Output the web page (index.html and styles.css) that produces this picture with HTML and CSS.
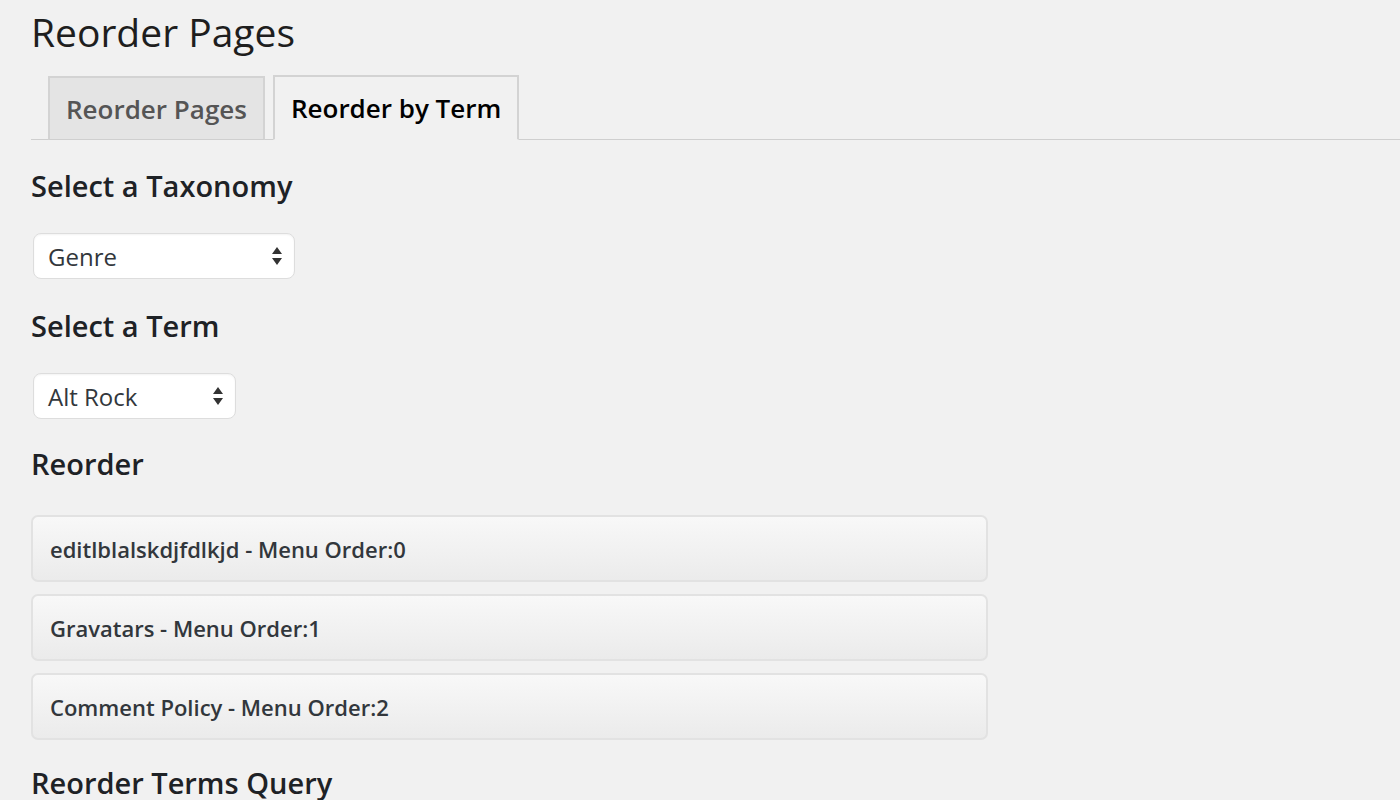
FILE: index.html
```html
<!DOCTYPE html>
<html>
<head>
<meta charset="utf-8">
<link rel="stylesheet" href="styles.css">
</head>
<body>
<div class="wrap">
  <h1 class="title">Reorder Pages</h1>
  <div class="tabs">
    <span class="tab">Reorder Pages</span>
    <span class="tab active">Reorder by Term</span>
  </div>
  <h2 class="section">Select a Taxonomy</h2>
  <div class="select sel-tax">
    <span>Genre</span>
    <svg class="arrows" width="12" height="20" viewBox="0 0 12 20"><path d="M6 1 L11 8 L1 8 Z M6 19 L11 12 L1 12 Z" fill="#333"/></svg>
  </div>
  <h2 class="section">Select a Term</h2>
  <div class="select sel-term">
    <span>Alt Rock</span>
    <svg class="arrows" width="12" height="20" viewBox="0 0 12 20"><path d="M6 1 L11 8 L1 8 Z M6 19 L11 12 L1 12 Z" fill="#333"/></svg>
  </div>
  <h2 class="section reorder">Reorder</h2>
  <ul class="list">
    <li class="item">editlblalskdjfdlkjd - Menu Order:0</li>
    <li class="item">Gravatars - Menu Order:1</li>
    <li class="item">Comment Policy - Menu Order:2</li>
  </ul>
  <h2 class="section query">Reorder Terms Query</h2>
</div>
</body>
</html>
```

FILE: styles.css
```css
html, body {
  margin: 0;
  padding: 0;
  background: #f1f1f1;
  height: 800px;
  overflow: hidden;
}
body {
  font-family: "Open Sans", "Liberation Sans", sans-serif;
  color: #23282d;
}
.wrap {
  padding: 0 0 0 31px;
}
.title {
  margin: 0;
  padding-top: 6px;
  font-size: 39px;
  font-weight: 400;
  line-height: 52px;
  color: #1e1e1e;
}
.tabs {
  display: flex;
  margin-top: 17px;
  padding-left: 17px;
  border-bottom: 1px solid #cfcfcf;
  height: 64px;
  align-items: flex-end;
}
.tab {
  box-sizing: border-box;
  height: 64px;
  margin-bottom: -1px;
  padding: 0 16px;
  display: flex;
  align-items: center;
  font-size: 26px;
  font-weight: 600;
  color: #555;
  background: #e4e4e4;
  border: 2px solid #d3d3d3;
  border-bottom: 1px solid #cfcfcf;
  margin-right: 8px;
}
.tab.active {
  background: #f1f1f1;
  color: #000;
  border-bottom-color: #f1f1f1;
  height: 65px;
}
.section {
  margin: 0;
  font-size: 29px;
  font-weight: 600;
  line-height: 40px;
  color: #1e2226;
}
.tabs + .section {
  margin-top: 26px;
}
.select {
  box-sizing: border-box;
  margin: 27px 0 27px 2px;
  height: 46px;
  background: #fff;
  border: 1px solid #ddd;
  border-radius: 8px;
  box-shadow: inset 0 1px 2px rgba(0,0,0,0.05);
  display: flex;
  align-items: center;
  justify-content: space-between;
  padding: 0 11px 0 14px;
  font-size: 24px;
  color: #32373c;
}
.sel-tax { width: 262px; }
.sel-term { width: 203px; }
.section.reorder {
  margin-top: -2px;
}
.list {
  list-style: none;
  margin: 31px 0 0;
  padding: 0;
  width: 957px;
}
.item {
  box-sizing: border-box;
  height: 67px;
  margin-bottom: 12px;
  padding-left: 17px;
  display: flex;
  align-items: center;
  font-size: 22px;
  font-weight: 600;
  color: #32373c;
  border: 2px solid #e2e2e2;
  border-radius: 7px;
  background: linear-gradient(#f8f8f8, #ebebeb);
}
.section.query {
  margin-top: 23px;
}
```
